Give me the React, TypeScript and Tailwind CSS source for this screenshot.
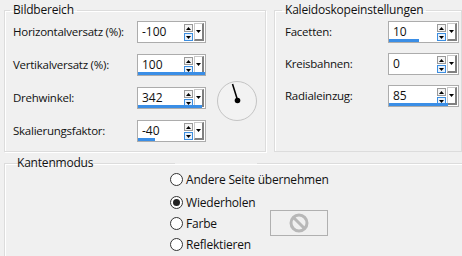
import React from "react";

function Spinner({ value, bar, w = 69 }: { value: string; bar?: number; w?: number }) {
  return (
    <div
      className="relative h-[22px] bg-white border border-[#acacac] flex items-center shrink-0"
      style={{ width: w }}
    >
      <span className="pl-[4px] text-[12px] text-[#101010] leading-none">{value}</span>
      <div className="absolute right-[12px] top-[2px] flex flex-col gap-[1px]">
        <div className="w-[9px] h-[8px] border border-[#9a9a9a] bg-[#f4f4f4] flex items-center justify-center">
          <svg width="5" height="3" viewBox="0 0 5 3"><path d="M0 3 L2.5 0 L5 3Z" fill="#000" /></svg>
        </div>
        <div className="w-[9px] h-[8px] border border-[#3c8ee0] bg-[#e8f1fb] flex items-center justify-center">
          <svg width="5" height="3" viewBox="0 0 5 3"><path d="M0 0 L2.5 3 L5 0Z" fill="#000" /></svg>
        </div>
      </div>
      <div className="absolute right-[1px] top-[1px] w-[10px] h-[18px] bg-white border-l border-t border-[#c8c8c8] border-r-2 border-b-2 border-r-[#808080] border-b-[#808080] flex items-center justify-center">
        <svg width="5" height="3" viewBox="0 0 5 3"><path d="M0 0 L2.5 3 L5 0Z" fill="#000" /></svg>
      </div>
      {bar !== undefined && (
        <div className="absolute left-0 bottom-0 h-[3px] bg-[#3a8ee6]" style={{ width: `${bar}%` }} />
      )}
    </div>
  );
}

function Radio({ label, checked }: { label: string; checked?: boolean }) {
  return (
    <div className="flex items-center gap-[3px] h-[21px]">
      <div className="w-[13px] h-[13px] rounded-full border border-[#333] bg-white flex items-center justify-center">
        {checked && <div className="w-[7px] h-[7px] rounded-full bg-[#222]" />}
      </div>
      <span className="text-[12px] text-[#111] tracking-[-0.2px]">{label}</span>
    </div>
  );
}

export default function App() {
  return (
    <div
      className="w-[462px] h-[256px] bg-[#f0f0f0] overflow-hidden text-[#111]"
      style={{ fontFamily: '"Open Sans", "Noto Sans", sans-serif' }}
    >
      <div className="flex pt-[2px]">
        <fieldset className="ml-[4px] w-[263px] h-[150px] border border-[#dcdcdc] shadow-[inset_1px_1px_0_#fff,1px_1px_0_#fff] px-[8px]">
          <legend className="px-[3px] text-[12px] leading-[16px] -ml-[3px] tracking-[-0.2px]">Bildbereich</legend>
          <div className="flex flex-col gap-[11px] pt-[3px]">
            <div className="flex items-center">
              <span className="w-[124px] text-[11.5px] tracking-[-0.25px]">Horizontalversatz (%):</span>
              <Spinner value="-100" />
            </div>
            <div className="flex items-center">
              <span className="w-[124px] text-[11.5px] tracking-[-0.25px]">Vertikalversatz (%):</span>
              <Spinner value="100" bar={100} />
            </div>
            <div className="flex items-center">
              <span className="w-[124px] text-[11.5px] tracking-[-0.25px]">Drehwinkel:</span>
              <Spinner value="342" bar={95} />
              <div className="ml-[11px] -mb-[16px] -mt-[10px] w-[40px] h-[40px] rounded-full border border-[#c4c4c4] bg-[#f2f2f2] shrink-0">
                <svg width="40" height="40" viewBox="0 0 40 40" className="-m-[1px]">
                  <line x1="15.5" y1="3" x2="20.5" y2="19" stroke="#000" strokeWidth="1.6" />
                  <circle cx="20.5" cy="19.5" r="2.8" fill="#000" />
                </svg>
              </div>
            </div>
            <div className="flex items-center">
              <span className="w-[124px] text-[11.5px] tracking-[-0.25px]">Skalierungsfaktor:</span>
              <Spinner value="-40" bar={26} />
            </div>
          </div>
        </fieldset>
        <fieldset className="ml-[8px] w-[200px] h-[150px] border border-[#dcdcdc] shadow-[inset_1px_1px_0_#fff] pl-[10px]">
          <legend className="px-[3px] text-[12px] leading-[16px] -ml-[3px] tracking-[-0.2px]">Kaleidoskopeinstellungen</legend>
          <div className="flex flex-col gap-[10px] pt-[3px]">
            <div className="flex items-center">
              <span className="w-[103px] text-[11.5px] tracking-[-0.25px]">Facetten:</span>
              <Spinner value="10" bar={44} w={71} />
            </div>
            <div className="flex items-center">
              <span className="w-[103px] text-[11.5px] tracking-[-0.25px]">Kreisbahnen:</span>
              <Spinner value="0" w={71} />
            </div>
            <div className="flex items-center">
              <span className="w-[103px] text-[11.5px] tracking-[-0.25px]">Radialeinzug:</span>
              <Spinner value="85" bar={85} w={71} />
            </div>
          </div>
        </fieldset>
      </div>
      <fieldset className="ml-[4px] mt-[3px] w-[470px] h-[120px] border border-[#dcdcdc] shadow-[inset_1px_1px_0_#fff] pl-[165px]">
        <legend className="ml-[5px] -translate-x-[161px] px-[3px] text-[12px] leading-[16px] tracking-[-0.2px]">Kantenmodus</legend>
        <div className="flex flex-col -mt-[2px]">
          <Radio label="Andere Seite übernehmen" />
          <div className="h-[2px]" />
          <Radio label="Wiederholen" checked />
          <div className="flex items-center h-[21px]">
            <Radio label="Farbe" />
            <div className="ml-[53px] -my-[4px] translate-y-[-1px] w-[58px] h-[26px] border border-[#b0b0b0] bg-[#f0f0f0] flex items-center justify-center">
              <svg width="20" height="20" viewBox="0 0 20 20">
                <circle cx="10" cy="10" r="8" fill="none" stroke="#b8b8b8" strokeWidth="3" />
                <line x1="4.5" y1="4.5" x2="15.5" y2="15.5" stroke="#b8b8b8" strokeWidth="3" />
              </svg>
            </div>
          </div>
          <Radio label="Reflektieren" />
        </div>
      </fieldset>
    </div>
  );
}
